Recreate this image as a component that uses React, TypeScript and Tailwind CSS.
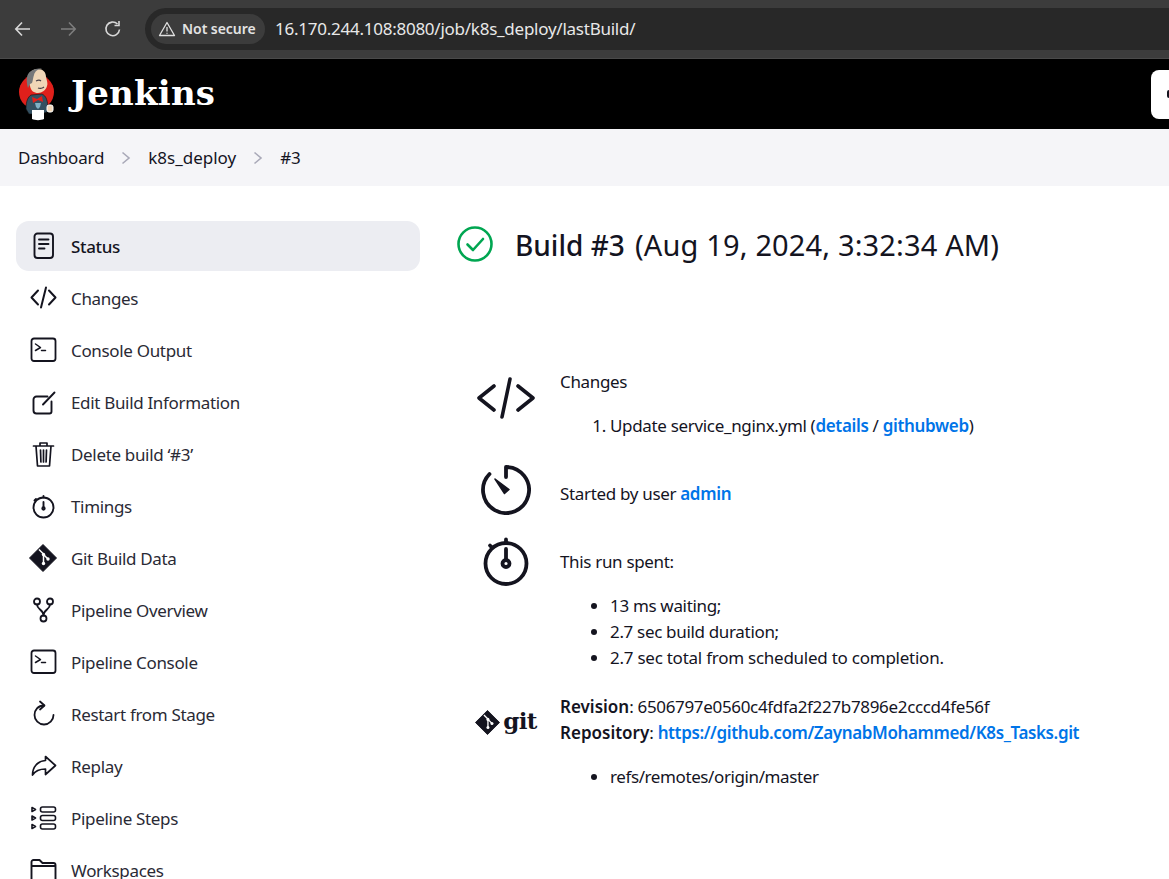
import React from "react";

const S = ({ children, fill = "none", w = 2, size = 28 }: { children: React.ReactNode; fill?: string; w?: number; size?: number }) => (
  <svg width={size} height={size} viewBox="0 0 28 28" fill={fill} stroke="#14141f" strokeWidth={w} strokeLinecap="round" strokeLinejoin="round" className="shrink-0">
    {children}
  </svg>
);

const ConsoleIcon = () => (
  <S w={1.8}>
    <rect x="2.5" y="2.5" width="24" height="22.500" rx="2.5" />
    <path d="M6.5 8l5 3.500-5 3M12.500 14.500h4" strokeWidth={1.5} />
  </S>
);

const GitDiamond = ({ size = 28 }: { size?: number }) => (
  <svg width={size} height={size} viewBox="0 0 28 28" className="shrink-0">
    <path d="M14 0.5 L27.5 14 L14 27.5 L0.5 14 Z" fill="#14141f" stroke="#14141f" strokeWidth="1" strokeLinejoin="round" />
    <path d="M10 5.5 L14.5 10 V19 M14.5 10.5 L19 15" stroke="#fff" strokeWidth="1.5" fill="none" />
    <circle cx="14.5" cy="10.5" r="1.7" fill="#fff" />
    <circle cx="19" cy="15" r="1.7" fill="#fff" />
    <circle cx="14.5" cy="19.5" r="1.7" fill="#fff" />
  </svg>
);

const items: [string, React.ReactNode][] = [
  ["Status", <S w={1.9}><rect x="5.500" y="1.500" width="18.500" height="24.500" rx="3" /><path d="M10 7.500h9.500M10 12h9.500M10 16.500h5.500" /></S>],
  ["Changes", <S w={2}><path d="M9 6.500L2.500 13.500l6.500 7M20 6.500l6.500 7-6.500 7M17 3.500l-5 20" /></S>],
  ["Console Output", <ConsoleIcon />],
  ["Edit Build Information", <S w={1.9}><path d="M18.500 8.500H7.500a3 3 0 00-3 3v11a3 3 0 003 3h13a2 2 0 002-2V13.500M14 16.500L25.500 4.500" /></S>],
  ["Delete build ‘#3’", <S w={1.7}><path d="M4.500 6h20M11 5.500V3h7v2.500M7 6l1.500 20h12L22 6M11.500 10l.4 12M14.500 10v12M17.500 10l-.4 12" /></S>],
  ["Timings", <S w={1.9}><circle cx="14.500" cy="15.500" r="10" /><path d="M14.500 10v5.500M14.500 5.500V4M7 7L5.500 8.500" /><circle cx="14.500" cy="16.500" r="1.200" /></S>],
  ["Git Build Data", <GitDiamond />],
  ["Pipeline Overview", <S w={1.8}><circle cx="8" cy="5.500" r="3" /><circle cx="21" cy="5.500" r="3" /><circle cx="14.500" cy="22.500" r="3" /><path d="M8 8.500c0 5 6.500 5 6.500 11M21 8.500c0 5-6.500 5-6.500 11" /></S>],
  ["Pipeline Console", <ConsoleIcon />],
  ["Restart from Stage", <S w={1.8}><path d="M15 5.500C9 5.500 5.500 10 5.500 15a9.500 9.500 0 0019 0" /><path d="M11 1.500l4.500 4-4.500 4" /></S>],
  ["Replay", <S w={1.7}><path d="M16.500 4.500l10 9-10 9v-5.500c-6 0-10 1.500-13 6 0-8 5-14 13-14.500z" /></S>],
  ["Pipeline Steps", <S w={1.6}><rect x="11.500" y="3" width="15" height="5" rx="2" /><rect x="11.500" y="11.500" width="15" height="5" rx="2" /><rect x="11.500" y="20" width="15" height="5" rx="2" /><path d="M3 3.500l3.500 2-3.500 2zM3 12l3.500 2-3.500 2zM3 20.500l3.500 2-3.500 2z" /></S>],
  ["Workspaces", <S w={1.9}><path d="M2.500 6a2 2 0 012-2h6l3 3h11a2 2 0 012 2v14a2 2 0 01-2 2h-20a2 2 0 01-2-2zM2.500 10h24" /></S>],
];

const Chevron = () => (
  <svg width="10" height="14" viewBox="0 0 10 14" fill="none" stroke="#a9a9b8" strokeWidth="1.6" className="mx-[17px]">
    <path d="M1.500 1.500L8 7l-6.500 5.500" />
  </svg>
);

const Link = ({ children }: { children: React.ReactNode }) => (
  <a className="font-semibold text-[#0074e8]">{children}</a>
);

const JenkinsLogo = () => (
  <svg width="40" height="54" viewBox="0 0 40 54" className="shrink-0">
    <circle cx="19.500" cy="25" r="17.500" fill="#e0201b" />
    <path d="M9 42c0-8 2-12 5-14l11-1c4 2 5 5 6 12l-1 6-6 2H12z" fill="#335061" stroke="#111" strokeWidth="0.6" />
    <path d="M12 11c0-6 4-9 9-9s8 3 8 8c1 4 2 7 1 9-1 4-5 7-9 7-4 0-7-2-8-7-1-3-1-5-1-8z" fill="#f0d6b7" />
    <path d="M11 21c-2-7-2-14 3-17 3-2 8-3 11-2-4 0-7 2-8 6-1 3-1 5-2 8l-2 1z" fill="#77787a" />
    <path d="M19 14c2-1 4-1 5 0M21 21c2 1 5 0 6-1" stroke="#49424a" strokeWidth="1.100" fill="none" />
    <path d="M15 30l5 2 5-3 1 6-5-2-5 3z" fill="#e0201b" />
    <path d="M18 36h6l-1 4-2 2-2-2z" fill="#81b0c4" />
    <path d="M15 43h12v9c-3 1.500-9 1.500-12 0z" fill="#fff" />
    <rect x="30" y="38" width="6" height="7" rx="2" fill="#f0d6b7" stroke="#fff" />
  </svg>
);

export default function App() {
  return (
    <div className="h-[879px] w-full overflow-hidden bg-white text-[#14141f] font-['Noto_Sans','Open_Sans',sans-serif] tracking-[-0.33px]">
      <div className="flex h-[59px] items-start border-b border-[#4a4a4a] bg-[#3c3c3c] pt-2 tracking-normal">
        <div className="flex h-[42px] w-[145px] shrink-0 items-center">
          <svg width="20" height="20" viewBox="0 0 20 20" fill="none" stroke="#d8d8d8" strokeWidth="1.6" className="ml-[13px]"><path d="M17 10H3M9 3.500L2.800 10 9 16.500" /></svg>
          <svg width="20" height="20" viewBox="0 0 20 20" fill="none" stroke="#7d7d7d" strokeWidth="1.6" className="ml-[25px]"><path d="M3 10h14M11 3.500l6.200 6.500-6.200 6.500" /></svg>
          <svg width="20" height="20" viewBox="0 0 20 20" fill="none" stroke="#d8d8d8" strokeWidth="1.6" className="ml-[25px]"><path d="M16.500 10.500A6.800 6.800 0 1114.500 5M16 2v4.500h-4.500" /></svg>
        </div>
        <div className="flex h-[42px] flex-1 items-center rounded-l-[21px] bg-[#282828] pl-[6px]">
          <div className="flex h-[30px] w-[114px] items-center gap-[6px] rounded-full bg-[#3c3c3c] pl-[7px]">
            <svg width="18" height="18" viewBox="0 0 18 18" fill="none" stroke="#e0e0e0" strokeWidth="1.3" strokeLinejoin="round"><path d="M9 2.500L16.500 15.500h-15zM9 7v4.500M9 12.800v1" /></svg>
            <span className="-mt-[1px] whitespace-nowrap text-[14px] font-semibold tracking-[-0.05px] text-[#e3e3e3]">Not secure</span>
          </div>
          <span className="ml-[10px] whitespace-nowrap text-[17px] tracking-[-0.25px] text-[#e8e8e8]">16.170.244.108:8080/job/k8s_deploy/lastBuild/</span>
        </div>
      </div>

      <header className="flex h-[70px] items-center bg-black pl-[17px]">
        <JenkinsLogo />
        <span className="ml-[14px] -mt-[2px] font-['DejaVu_Serif',serif] text-[34px] font-bold tracking-[0.2px] text-white">Jenkins</span>
        <div className="ml-auto flex h-[49px] w-[18px] items-center overflow-hidden rounded-l-lg bg-white pl-[16px]">
          <div className="h-[8px] w-[4px] shrink-0 rounded-full bg-[#14141f]" />
        </div>
      </header>

      <nav className="flex h-[57px] items-center bg-[#f5f5f8] pl-[18px] text-[17px] tracking-[-0.2px]">
        <span>Dashboard</span>
        <Chevron />
        <span className="tracking-normal">k8s_deploy</span>
        <Chevron />
        <span>#3</span>
      </nav>

      <div className="flex pt-[35px]">
        <aside className="ml-[16px] flex w-[404px] shrink-0 flex-col gap-[2px]">
          {items.map(([label, icon], i) => (
            <div key={label} className={`flex h-[50px] shrink-0 items-center gap-[14px] rounded-[13px] pl-[13px] text-[17px] ${i === 0 ? "bg-[#ecedf2] font-medium" : "text-[#2a2a35]"}`}>
              {icon}
              <span className="whitespace-nowrap pt-[1px]">{label}</span>
            </div>
          ))}
        </aside>

        <main className="ml-[37px] flex-1 text-[17px] leading-[26px]">
          <div className="flex h-[50px] items-center">
            <svg width="36" height="36" viewBox="0 0 36 36" fill="none" stroke="#00a651" strokeWidth="2.6" strokeLinecap="round" strokeLinejoin="round" className="-mt-[4px] shrink-0">
              <circle cx="18" cy="18" r="16.500" />
              <path d="M10.500 18.500l5.500 5.500 10-11" />
            </svg>
            <h1 className="-mt-[2px] ml-[22px] whitespace-nowrap text-[28px] font-medium leading-[36px] tracking-normal">
              Build #3 <span className="ml-[3px] text-[29px] font-normal tracking-[0.15px]">(Aug 19, 2024, 3:32:34 AM)</span>
            </h1>
          </div>

          <div className="mt-[98px] flex h-[70px]">
            <div className="mr-[5px] flex w-[98px] shrink-0 justify-center pt-[8px]">
              <svg width="58" height="42" viewBox="0 0 58 42" fill="none" stroke="#14141f" strokeWidth="3.6" strokeLinecap="round" strokeLinejoin="round">
                <path d="M17 9L2 21l15 12M41 9l15 12-15 12M33 2l-8 38" />
              </svg>
            </div>
            <div>
              <p>Changes</p>
              <ol className="mt-[18px] list-decimal pl-[50px]">
                <li>Update service_nginx.yml (<Link>details</Link> / <Link>githubweb</Link>)</li>
              </ol>
            </div>
          </div>

          <div className="mt-[26px] flex h-[50px]">
            <div className="mr-[5px] flex w-[98px] shrink-0 justify-center">
              <svg width="50" height="50" viewBox="0 0 50 50" fill="none" stroke="#14141f" strokeWidth="3.800" strokeLinecap="round" strokeLinejoin="round">
                <path d="M25 2a23 23 0 11-16.500 7M25 2v10" />
                <path d="M14 14l9.500 14.500 4.500-4z" fill="#14141f" strokeWidth="1.500" />
              </svg>
            </div>
            <p className="mt-[16px]">Started by user <Link>admin</Link></p>
          </div>

          <div className="mt-[22px] flex">
            <div className="mr-[5px] flex h-[49px] w-[98px] shrink-0 justify-center">
              <svg width="46" height="49" viewBox="0 0 46 49" fill="none" stroke="#14141f" strokeWidth="3.800" strokeLinecap="round" strokeLinejoin="round">
                <circle cx="23" cy="26.500" r="20.500" />
                <path d="M23 2.500v3M7 8.500l2 2M23 12v10" />
                <circle cx="23" cy="26.500" r="3.500" />
              </svg>
            </div>
            <div className="mt-[12px]">
              <p>This run spent:</p>
              <ul className="mt-[18px] list-disc pl-[50px]">
                <li>13 ms waiting;</li>
                <li>2.7 sec build duration;</li>
                <li className="tracking-[-0.25px]">2.7 sec total from scheduled to completion.</li>
              </ul>
            </div>
          </div>

          <div className="mt-[23px] flex items-start">
            <div className="mr-[5px] flex w-[98px] shrink-0 justify-center pt-[16px]">
              <div className="flex items-center gap-[3px]">
                <GitDiamond size={25} />
                <span className="-mt-[4px] font-['DejaVu_Serif',serif] text-[23px] font-bold leading-[24px] tracking-[-0.7px]">git</span>
              </div>
            </div>
            <div>
              <p><b className="font-semibold tracking-normal">Revision</b>: 6506797e0560c4fdfa2f227b7896e2cccd4fe56f</p>
              <p><b className="font-semibold tracking-normal">Repository</b>: <span className="tracking-[-0.38px]"><Link>https://github.com/ZaynabMohammed/K8s_Tasks.git</Link></span></p>
              <ul className="mt-[18px] list-disc pl-[50px]">
                <li className="tracking-[-0.4px]">refs/remotes/origin/master</li>
              </ul>
            </div>
          </div>
        </main>
      </div>
    </div>
  );
}
